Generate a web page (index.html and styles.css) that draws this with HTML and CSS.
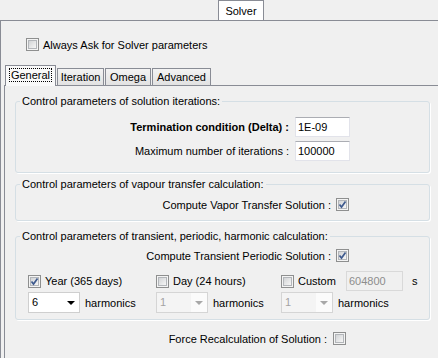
FILE: index.html
```html
<!DOCTYPE html>
<html lang="en">
<head>
  <meta charset="UTF-8">
  <title>Solver</title>
  <link rel="stylesheet" href="styles.css">
</head>
<body>

  <div class="top-strip">
    <div class="top-tab">Solver</div>
  </div>

  <div class="panel">
    <div class="check-row ask">
      <span class="cb"></span>
      <span>Always Ask for Solver parameters</span>
    </div>

    <div class="tabs">
      <div class="tab-strip">
        <div class="tab active"><span class="focus">General</span></div>
        <div class="tab">Iteration</div>
        <div class="tab">Omega</div>
        <div class="tab">Advanced</div>
      </div>

      <div class="tab-page">
        <fieldset class="group g1">
          <legend>Control parameters of solution iterations:</legend>
          <div class="row">
            <span class="lbl lbl-field bold">Termination condition (Delta) :</span>
            <span class="field">1E-09</span>
          </div>
          <div class="row row2">
            <span class="lbl lbl-field">Maximum number of iterations :</span>
            <span class="field">100000</span>
          </div>
        </fieldset>

        <fieldset class="group g2">
          <legend>Control parameters of vapour transfer calculation:</legend>
          <div class="row row-check">
            <span class="lbl lbl-check">Compute Vapor Transfer Solution :</span>
            <span class="cb checked"><svg width="13" height="13" viewBox="0 0 13 13"><path d="M3.5 6.5 L5.5 9 L9.5 3.5" fill="none" stroke="#3e5a8e" stroke-width="1.7"/></svg></span>
          </div>
        </fieldset>

        <fieldset class="group g3">
          <legend>Control parameters of transient, periodic, harmonic calculation:</legend>
          <div class="row row-check">
            <span class="lbl lbl-check">Compute Transient Periodic Solution :</span>
            <span class="cb checked"><svg width="13" height="13" viewBox="0 0 13 13"><path d="M3.5 6.5 L5.5 9 L9.5 3.5" fill="none" stroke="#3e5a8e" stroke-width="1.7"/></svg></span>
          </div>

          <div class="period-grid">
            <div class="cell">
              <span class="cb checked"><svg width="13" height="13" viewBox="0 0 13 13"><path d="M3.5 6.5 L5.5 9 L9.5 3.5" fill="none" stroke="#3e5a8e" stroke-width="1.7"/></svg></span>
              <span>Year (365 days)</span>
            </div>
            <div class="cell">
              <span class="cb"></span>
              <span>Day (24 hours)</span>
            </div>
            <div class="cell">
              <span class="cb"></span>
              <span>Custom</span>
              <span class="field field-off">604800</span>
              <span class="unit">s</span>
            </div>

            <div class="cell cell-combo">
              <span class="combo">6<i class="arrow"></i></span>
              <span class="harm">harmonics</span>
            </div>
            <div class="cell cell-combo">
              <span class="combo combo-off">1<i class="arrow"></i></span>
              <span class="harm">harmonics</span>
            </div>
            <div class="cell cell-combo">
              <span class="combo combo-off">1<i class="arrow"></i></span>
              <span class="harm">harmonics</span>
            </div>
          </div>
        </fieldset>

        <div class="row row-check force">
          <span class="lbl lbl-force">Force Recalculation of Solution :</span>
          <span class="cb"></span>
        </div>
      </div>
    </div>
  </div>

</body>
</html>
```

FILE: styles.css
```css
html, body {
  margin: 0;
  padding: 0;
  height: 100%;
  overflow: hidden;
  background: #f0f0f0;
  font-family: "Liberation Sans", Arial, sans-serif;
  font-size: 11px;
  color: #000;
}

/* outer "Solver" tab */
.top-strip {
  height: 20px;
  border-bottom: 1px solid #898c95;
}

.top-tab {
  margin-left: 218px;
  width: 46px;
  height: 20px;
  line-height: 20px;
  text-align: center;
  background: #fff;
  border: 1px solid #898c95;
  border-bottom: none;
  box-sizing: border-box;
}

.panel {
  border-left: 1px solid #898c95;
  height: 337px;
  overflow: hidden;
}

/* checkbox */
.cb {
  display: inline-block;
  position: relative;
  width: 13px;
  height: 13px;
  box-sizing: border-box;
  border: 1px solid #8e8f8f;
  background: #f4f4f4;
  flex: none;
}

.cb::before {
  content: "";
  position: absolute;
  left: 1px;
  top: 1px;
  right: 1px;
  bottom: 1px;
  border: 1px solid #b3b6ba;
  background: linear-gradient(135deg, #d2d4d6, #f6f6f6);
}

.cb svg {
  position: absolute;
  left: -1px;
  top: -1px;
  z-index: 1;
}

.check-row {
  display: flex;
  align-items: center;
  height: 13px;
}

.ask {
  padding-top: 17px;
  padding-left: 25px;
  gap: 4px;
}

/* inner tab control */
.tabs {
  margin-top: 14px;
  margin-left: 3px;
}

.tab-strip {
  display: flex;
  align-items: flex-end;
  height: 20px;
  padding-left: 1px;
}

.tab {
  height: 17px;
  line-height: 16px;
  text-align: center;
  box-sizing: border-box;
  border: 1px solid #898c95;
  border-bottom: none;
  background: linear-gradient(#f3f3f3, #e2e2e2);
  width: 47px;
}

.tab + .tab {
  margin-left: 1px;
}

.tab.active {
  position: relative;
  z-index: 1;
  height: 21px;
  width: 51px;
  margin-bottom: -1px;
  padding-top: 2px;
  line-height: 15px;
  background: #f9f9f9;
}

.tab:nth-child(3) {
  width: 46px;
}

.tab:nth-child(4) {
  width: 59px;
}

.focus {
  outline: 1px dotted #000;
  padding: 0 1px;
}

.tab-page {
  border-left: 1px solid #898c95;
  border-top: 1px solid #898c95;
  height: 272px;
}

/* group boxes */
.group {
  margin: 0 0 0 10px;
  padding: 0;
  width: 415px;
  box-sizing: border-box;
  border: 1px solid #d5dfe5;
  border-radius: 3px;
  box-shadow: 1px 1px 0 #fff;
}

.group legend {
  margin-left: 4px;
  padding: 0 2px;
  line-height: 13px;
}

.g1 {
  margin-top: 9px;
  padding-top: 9px;
  padding-bottom: 11px;
}

.g2 {
  margin-top: 5px;
  padding-top: 7px;
  padding-bottom: 9px;
}

.g3 {
  margin-top: 9px;
  padding-top: 6px;
  padding-bottom: 6px;
}

.row {
  display: flex;
  align-items: center;
  height: 20px;
}

.row2 {
  margin-top: 4px;
}

.row-check {
  height: 13px;
}

.lbl {
  text-align: right;
  white-space: nowrap;
}

.lbl-field {
  width: 273px;
  margin-right: 6px;
}

.lbl-check {
  width: 315px;
  margin-right: 5px;
}

.bold {
  font-weight: bold;
}

.field {
  display: inline-block;
  width: 55px;
  height: 20px;
  line-height: 18px;
  box-sizing: border-box;
  padding-left: 2px;
  background: #fff;
  border: 1px solid #e2e3ea;
  border-top-color: #abadb3;
}

.field-off {
  width: 57px;
  margin-left: 6px;
  background: #f0f0f0;
  color: #8d8d8d;
  border-color: #d9d9d9;
}

.unit {
  margin-left: 5px;
}

/* period rows */
.period-grid {
  display: grid;
  grid-template-columns: 128px 125px auto;
  padding-left: 12px;
  margin-top: 9px;
  row-gap: 1px;
}

.cell {
  display: flex;
  align-items: center;
  height: 20px;
  gap: 4px;
  white-space: nowrap;
}

.cell-combo {
  height: 21px;
  gap: 5px;
}

.combo {
  position: relative;
  display: inline-block;
  width: 52px;
  height: 21px;
  line-height: 19px;
  box-sizing: border-box;
  padding-left: 3px;
  background: #fff;
  border: 1px solid #cfcfcf;
  flex: none;
}

.arrow {
  position: absolute;
  right: 4px;
  top: 8px;
  width: 0;
  height: 0;
  border-left: 4px solid transparent;
  border-right: 4px solid transparent;
  border-top: 4px solid #000;
}

.combo-off {
  color: #a3a3a3;
  background: linear-gradient(90deg, #f4f4f4 0, #f4f4f4 34px, #fbfbfb 34px);
  border-color: #d5d5d5;
}

.combo-off .arrow {
  border-top-color: #a8a8a8;
}

.force {
  margin-top: 12px;
}

.lbl-force {
  width: 322px;
  margin-right: 6px;
}
```
